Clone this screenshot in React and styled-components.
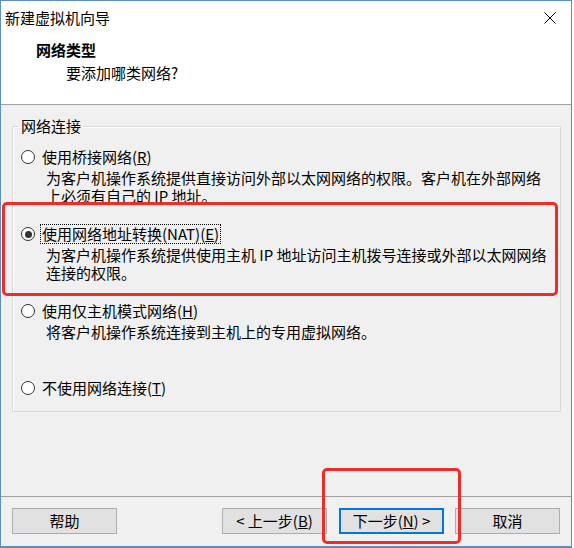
import React from 'react'
import styled, { createGlobalStyle } from 'styled-components'

const GlobalStyle = createGlobalStyle`
  html, body {
    margin: 0;
    padding: 0;
    background: #ffffff;
  }
  * {
    box-sizing: border-box;
  }
`

const Window = styled.div`
  width: 572px;
  height: 548px;
  border: 1px solid #5b8fc0;
  border-bottom-width: 2px;
  display: flex;
  flex-direction: column;
  font-family: "Noto Sans CJK SC", "Noto Sans", sans-serif;
  font-size: 15px;
  color: #000;
  background: #f0f0f0;
`

const TitleBar = styled.div`
  height: 33px;
  background: #fff;
  display: flex;
  align-items: center;
  justify-content: space-between;
  padding: 0 15px 0 4px;
  font-size: 15px;
  line-height: 20px;
`

const Header = styled.div`
  height: 71px;
  background: #fff;
  border-bottom: 1px solid #a0a0a0;
  padding: 6px 0 0 35px;
`

const HeaderTitle = styled.div`
  font-weight: bold;
  font-size: 15px;
  line-height: 20px;
`

const HeaderSub = styled.div`
  margin: 3px 0 0 30px;
  font-size: 15px;
  line-height: 20px;
`

const Body = styled.div`
  flex: 1;
  padding: 12px 10px 0 11px;
`

const Group = styled.fieldset`
  margin: 0;
  padding: 0 8px 13px 8px;
  border: 1px solid #d9d9d9;
  box-shadow: inset 1px 1px 0 #fff;
`

const Legend = styled.legend`
  margin-left: -2px;
  padding: 0 2px;
  font-size: 15px;
  line-height: 18px;
`

const Options = styled.div`
  margin-top: 12px;
  display: flex;
  flex-direction: column;
  gap: 19px;
`

const Option = styled.div`
  position: relative;
`

const Row = styled.div`
  display: flex;
  align-items: center;
  height: 20px;
  gap: 6px;
`

const Radio = styled.span`
  width: 14px;
  height: 14px;
  border-radius: 50%;
  border: 1px solid #333;
  background: #fff;
  display: flex;
  align-items: center;
  justify-content: center;
  flex-shrink: 0;
  &::after {
    content: '';
    width: 7px;
    height: 7px;
    border-radius: 50%;
    background: ${p => (p.$checked ? '#333' : 'transparent')};
  }
`

const Label = styled.span`
  line-height: 18px;
  padding: 0 1px;
  margin-left: -1px;
  border: 1px dotted ${p => (p.$focused ? '#000' : 'transparent')};
`

const Desc = styled.div`
  margin: 2px 0 0 25px;
  min-height: 36px;
  line-height: 18px;
  white-space: pre-line;
`

const Highlight = styled.div`
  position: absolute;
  border: 3px solid #ec2d2a;
  border-radius: 5px;
  pointer-events: none;
  left: ${p => p.$left}px;
  top: ${p => p.$top}px;
  width: ${p => p.$width}px;
  height: ${p => p.$height}px;
`

const Footer = styled.div`
  height: 50px;
  border-top: 1px solid #a0a0a0;
  display: flex;
  align-items: flex-start;
  padding: 11px 11px 0 11px;
`

const Button = styled.button`
  width: 105px;
  height: 26px;
  font-family: inherit;
  font-size: 15px;
  line-height: 18px;
  color: #000;
  background: #e1e1e1;
  border: ${p => (p.$default ? '2px solid #0078d7' : '1px solid #adadad')};
  padding: 0;
  display: flex;
  align-items: center;
  justify-content: center;
`

const NavGroup = styled.div`
  margin-left: auto;
  display: flex;
  gap: 12px;
`

const NextWrap = styled.div`
  position: relative;
`

const CancelButton = styled(Button)`
  margin-left: 11px;
`

const CloseIcon = () => (
  <svg width="12" height="12" viewBox="0 0 12 12">
    <path d="M0.5 0.5 L11.5 11.5 M11.5 0.5 L0.5 11.5" stroke="#000" strokeWidth="1" fill="none" />
  </svg>
)

const options = [
  {
    label: <>使用桥接网络(<u>R</u>)</>,
    desc: '为客户机操作系统提供直接访问外部以太网网络的权限。客户机在外部网络\n上必须有自己的 IP 地址。',
  },
  {
    label: <>使用网络地址转换(NAT)(<u>E</u>)</>,
    desc: '为客户机操作系统提供使用主机 IP 地址访问主机拨号连接或外部以太网网络\n连接的权限。',
    checked: true,
  },
  {
    label: <>使用仅主机模式网络(<u>H</u>)</>,
    desc: '将客户机操作系统连接到主机上的专用虚拟网络。',
  },
  {
    label: <>不使用网络连接(<u>T</u>)</>,
  },
]

export default function App() {
  return (
    <>
      <GlobalStyle />
      <Window>
        <TitleBar>
          <span>新建虚拟机向导</span>
          <CloseIcon />
        </TitleBar>
        <Header>
          <HeaderTitle>网络类型</HeaderTitle>
          <HeaderSub>要添加哪类网络?</HeaderSub>
        </Header>
        <Body>
          <Group>
            <Legend>网络连接</Legend>
            <Options>
              {options.map((o, i) => (
                <Option key={i}>
                  <Row>
                    <Radio $checked={o.checked} />
                    <Label $focused={o.checked}>{o.label}</Label>
                  </Row>
                  {o.desc && <Desc>{o.desc}</Desc>}
                  {o.checked && <Highlight $left={-19} $top={-22} $width={556} $height={94} />}
                </Option>
              ))}
            </Options>
          </Group>
        </Body>
        <Footer>
          <Button>帮助</Button>
          <NavGroup>
            <Button>&lt; 上一步(<u>B</u>)</Button>
            <NextWrap>
              <Button $default>下一步(<u>N</u>) &gt;</Button>
              <Highlight $left={-17} $top={-40} $width={139} $height={76} />
            </NextWrap>
          </NavGroup>
          <CancelButton>取消</CancelButton>
        </Footer>
      </Window>
    </>
  )
}
